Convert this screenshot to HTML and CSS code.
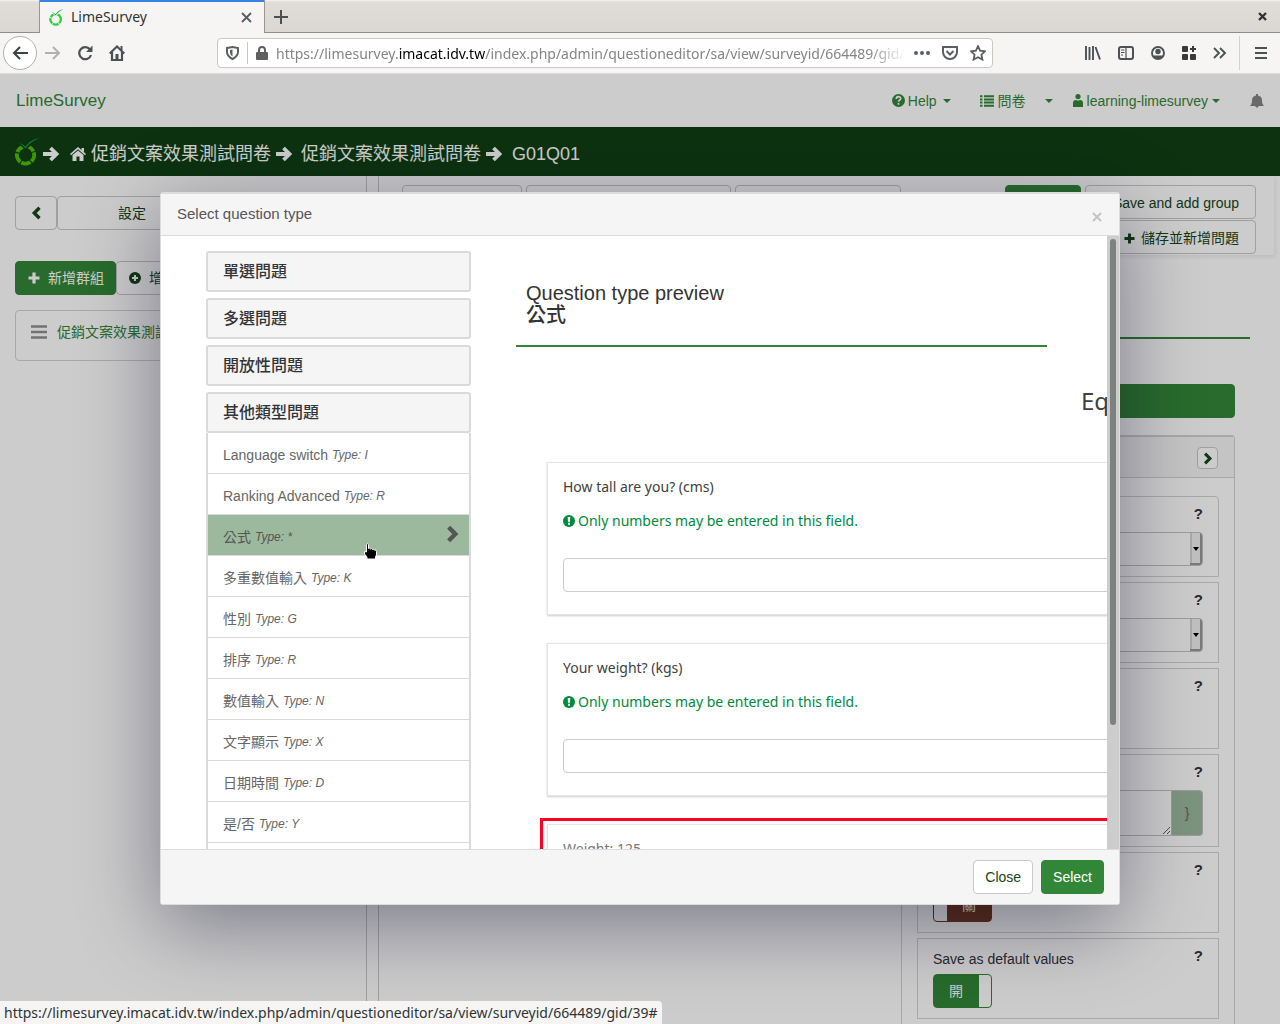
FILE: index.html
```html
<!DOCTYPE html>
<html lang="zh-Hant">
<head>
<meta charset="utf-8">
<meta name="viewport" content="width=device-width, initial-scale=1">
<title>LimeSurvey</title>
<link rel="stylesheet" href="styles.css">
</head>
<body>
<svg class="defs" aria-hidden="true">
  <symbol id="arrow" viewBox="0 0 16 16"><path d="M0 8h12M7.500 2l6 6-6 6" fill="none" stroke="currentColor" stroke-width="3.800"/></symbol>
  <symbol id="chev-r" viewBox="0 0 16 16"><path d="M5 2l6 6-6 6" fill="none" stroke="currentColor" stroke-width="3.800"/></symbol>
  <symbol id="chev-l" viewBox="0 0 16 16"><path d="M12 2L6 8l6 6" fill="none" stroke="currentColor" stroke-width="3.800"/></symbol>
  <symbol id="plus" viewBox="0 0 12 12"><path d="M6 .500v11M.500 6h11" stroke="currentColor" stroke-width="3.200" fill="none"/></symbol>
  <symbol id="logo" viewBox="0 0 24 28"><circle cx="10.500" cy="17" r="8.600" fill="none" stroke="currentColor" stroke-width="3.800" stroke-dasharray="9.650 1.150" transform="rotate(-18 10.500 17)"/><path class="gap" d="M4 6l6.500 6.500L18 5z"/><path class="leaf" d="M4 4l6.500 4.500C14 4 18 1 24 .500 18 2.500 14 6 10.500 10.500z"/></symbol>
  <symbol id="warn" viewBox="0 0 12 12"><circle cx="6" cy="6" r="6" fill="currentColor"/><path d="M4.700 2h2.600L7 6.800H5zM5 7.800h2v2H5z" fill="#fff"/></symbol>
</svg>

<div class="browser">
  <div class="tabs">
    <div class="tab">
      <svg class="logo tab-logo" width="15" height="17"><use href="#logo"/></svg>
      <span class="tab-title">LimeSurvey</span>
      <button class="chrome-btn" aria-label="Close tab"><svg width="11" height="11" viewBox="0 0 11 11"><path d="M1 1l9 9M10 1l-9 9" stroke="#555b5e" stroke-width="1.800"/></svg></button>
    </div>
    <button class="chrome-btn new-tab" aria-label="New tab"><svg width="14" height="14" viewBox="0 0 14 14"><path d="M7 0v14M0 7h14" stroke="#4b5052" stroke-width="2"/></svg></button>
    <button class="chrome-btn win-close" aria-label="Close window"><svg width="9" height="9" viewBox="0 0 9 9"><path d="M1 1l7 7M8 1L1 8" stroke="#2e3436" stroke-width="2.400"/></svg></button>
  </div>
  <div class="toolbar">
    <button class="chrome-btn back" aria-label="Back"><svg width="16" height="14" viewBox="0 0 16 14"><path d="M16 7H2M8 1L2 7l6 6" fill="none" stroke="#3c4245" stroke-width="2"/></svg></button>
    <button class="chrome-btn fwd" aria-label="Forward"><svg width="16" height="14" viewBox="0 0 16 14"><path d="M0 7h14M8 1l6 6-6 6" fill="none" stroke="#b0b1b0" stroke-width="2"/></svg></button>
    <button class="chrome-btn reload" aria-label="Reload"><svg width="16" height="16" viewBox="0 0 16 16"><path d="M13 4.500A6 6 0 1 0 14 10" fill="none" stroke="#4b5255" stroke-width="2.200"/><path d="M15.500.500v6.500H9z" fill="#4b5255"/></svg></button>
    <button class="chrome-btn home" aria-label="Home"><svg width="16" height="16" viewBox="0 0 16 16"><path d="M.700 8.500L8 1.500l7.300 7M3 7v8h10V7" fill="none" stroke="#4b5255" stroke-width="2.200"/><path d="M6.500 9h3v6h-3zM11.500 1h2v4h-2z" fill="#4b5255"/></svg></button>
    <div class="urlbar">
      <svg width="13" height="14" viewBox="0 0 13 14"><path d="M1 2l5.500-1L12 2v4c0 3.500-2.500 5.500-5.500 7C3.500 11.500 1 9.500 1 6z" fill="none" stroke="#5b5f61" stroke-width="2"/><path d="M4 4l2.500-.500v7C4.500 9 4 8 4 6z" fill="#5b5f61"/></svg>
      <span class="url-sep"></span>
      <svg width="12" height="14" viewBox="0 0 12 14"><path d="M3 7V4a3 3 0 0 1 6 0v3" fill="none" stroke="#606060" stroke-width="2"/><rect y="6" width="12" height="8" rx="1" fill="#606060"/></svg>
      <span class="url">https://limesurvey.<b>imacat.idv.tw</b>/index.php/admin/questioneditor/sa/view/surveyid/664489/gid/</span>
      <svg width="16" height="4" viewBox="0 0 16 4" fill="#5b5f61"><circle cx="2" cy="2" r="2"/><circle cx="8" cy="2" r="2"/><circle cx="14" cy="2" r="2"/></svg>
      <svg class="pocket" width="16" height="15" viewBox="0 0 16 15"><path d="M1 1h14v5a7 7 0 0 1-14 0z" fill="none" stroke="#5b5f61" stroke-width="2"/><path d="M4.500 5L8 8.500 11.500 5" fill="none" stroke="#5b5f61" stroke-width="2"/></svg>
      <svg class="star" width="16" height="16" viewBox="0 0 16 16"><path d="M8 1.200l2.100 4.500 4.900.600-3.600 3.400 1 4.900L8 12.200l-4.400 2.400 1-4.900L1 6.300l4.900-.600z" fill="none" stroke="#5b5f61" stroke-width="1.800"/></svg>
    </div>
    <div class="tools">
      <svg width="16" height="14" viewBox="0 0 16 14"><path d="M1 0v14M4.500 1v13M8 0v14M10.500 1l4.500 12.500" stroke="#4b5255" stroke-width="1.900"/></svg>
      <svg width="16" height="14" viewBox="0 0 16 14"><rect x="1" y="1" width="14" height="12" rx="2" fill="none" stroke="#4b5255" stroke-width="2"/><path d="M8 1v12M3 4h3.500M3 6.500h3.500M3 9h2" stroke="#4b5255" stroke-width="1.200"/></svg>
      <svg width="14" height="14" viewBox="0 0 14 14"><circle cx="7" cy="7" r="6" fill="none" stroke="#4b5255" stroke-width="1.900"/><circle cx="7" cy="5.500" r="2.700" fill="#4b5255"/><path d="M2.500 9.500h9C10.500 12 9 13 7 13s-3.500-1-4.500-3.500z" fill="#4b5255"/></svg>
      <svg width="14" height="14" viewBox="0 0 14 14" fill="#3a3a3a"><rect width="6" height="6" rx="1"/><rect y="8" width="6" height="6" rx="1"/><rect x="8" y="8" width="6" height="6" rx="1"/><path d="M10 0h2v2h2v2h-2v2h-2V4H8V2h2z"/></svg>
      <svg width="14" height="12" viewBox="0 0 14 12"><path d="M1 1l5 5-5 5M7 1l5 5-5 5" fill="none" stroke="#4b5255" stroke-width="1.900"/></svg>
    </div>
    <button class="chrome-btn burger" aria-label="Menu"><svg width="12" height="12" viewBox="0 0 12 12"><path d="M0 1h12M0 6h12M0 11h12" stroke="#4b5255" stroke-width="2"/></svg></button>
  </div>

  <div class="viewport">
    <div class="app">
      <nav class="topnav">
        <a class="brand" href="#">LimeSurvey</a>
        <a class="nav-help" href="#"><svg width="13" height="13" viewBox="0 0 13 13"><circle cx="6.500" cy="6.500" r="6.500" fill="currentColor"/><path d="M4.300 5c0-3 4.400-3 4.400-.400 0 1.600-2.200 1.500-2.200 3.200M6.500 9v1.800" stroke="#fff" stroke-width="1.700" fill="none"/></svg>Help<i class="caret"></i></a>
        <a class="nav-surveys" href="#"><svg width="14" height="12" viewBox="0 0 14 12"><path d="M0 1.200h2.500M4 1.200h10M0 4.400h2.500M4 4.400h10M0 7.600h2.500M4 7.600h10M0 10.800h2.500M4 10.800h10" stroke="currentColor" stroke-width="2"/></svg>問卷</a>
        <a class="nav-more" href="#" aria-label="More"><i class="caret"></i></a>
        <a class="nav-user" href="#"><svg width="10" height="13" viewBox="0 0 10 13" fill="currentColor"><circle cx="5" cy="2.600" r="2.600"/><path d="M0 13V9q0-3 3-3 2 1 4 0 3 0 3 3v4z"/></svg>learning-limesurvey<i class="caret"></i></a>
        <a class="nav-bell" href="#" aria-label="Notifications"><svg width="14" height="14" viewBox="0 0 14 14" fill="#858585"><path d="M6 0h2v1.500c3 .500 4 2.500 4 5 0 2.500.500 3.500 2 5.500H0c1.500-2 2-3 2-5.500 0-2.500 1-4.500 4-5zM5 12h4L7 14z"/></svg></a>
      </nav>
      <div class="crumbs">
        <svg class="logo crumb-logo" width="24" height="28"><use href="#logo"/></svg>
        <svg width="16" height="16"><use href="#arrow"/></svg>
        <a class="crumb-home" href="#"><svg width="16" height="14" viewBox="0 0 16 14" fill="currentColor"><path d="M8 0l8 7-1 1.300L8 2.300l-7 6L0 7zM11.500 1H14v4l-2.500-2zM8 3.500L13.500 8v6H9.500V9.500h-3V14h-4V8z"/></svg>促銷文案效果測試問卷</a>
        <svg width="16" height="16"><use href="#arrow"/></svg>
        <a class="crumb-group" href="#">促銷文案效果測試問卷</a>
        <svg width="16" height="16"><use href="#arrow"/></svg>
        <span class="crumb-question">G01Q01</span>
      </div>
      <div class="columns">
        <aside class="sidebar">
          <div class="btn-row">
            <button class="btn collapse" aria-label="Collapse"><svg width="14" height="14"><use href="#chev-l"/></svg></button>
            <button class="btn settings">設定</button>
          </div>
          <div class="btn-row add-row">
            <button class="btn primary"><svg width="12" height="12"><use href="#plus"/></svg>新增群組</button>
            <button class="btn add-question"><svg width="12" height="12" viewBox="0 0 12 12"><circle cx="6" cy="6" r="6" fill="currentColor"/><path d="M6 3v6M3 6h6" stroke="#fff" stroke-width="2"/></svg>增</button>
          </div>
          <div class="group-item">
            <svg width="16" height="14" viewBox="0 0 16 14"><path d="M0 1.500h16M0 7h16M0 12.500h16" stroke="#8f8f8f" stroke-width="2.600"/></svg>
            <a href="#">促銷文案效果測試問卷</a>
          </div>
        </aside>
        <div class="splitter"></div>
        <main class="editor">
          <div class="actions">
            <button class="btn b1" aria-label="Preview survey"></button>
            <button class="btn b2" aria-label="Preview group"></button>
            <button class="btn b3" aria-label="Preview question"></button>
            <div class="saves">
              <button class="btn primary b4" aria-label="Save"></button>
              <button class="btn save-group">Save and add group</button>
              <button class="btn save-question"><svg width="11" height="11"><use href="#plus"/></svg>儲存並新增問題</button>
            </div>
          </div>
          <div class="title-rule"></div>
          <div class="editor-body">
            <button class="btn primary type-btn" aria-label="Question type"></button>
            <section class="options">
              <div class="options-head"><button class="btn next" aria-label="Next"><svg width="13" height="13"><use href="#chev-r"/></svg></button></div>
              <div class="options-body">
                <div class="option"><div class="option-head"><button class="q" aria-label="Help">?</button></div><div class="select-wrap"><select class="dropdown" aria-label="Option"></select></div></div>
                <div class="option"><div class="option-head"><button class="q" aria-label="Help">?</button></div><div class="select-wrap"><select class="dropdown" aria-label="Option"></select></div></div>
                <div class="option"><div class="option-head"><button class="q" aria-label="Help">?</button></div></div>
                <div class="option"><div class="option-head"><button class="q" aria-label="Help">?</button></div><div class="expression"><textarea aria-label="Expression"></textarea><span>}</span></div></div>
                <div class="option"><div class="option-head"><button class="q" aria-label="Help">?</button></div><label class="switch off"><input type="checkbox"><span>關</span></label></div>
                <div class="option"><div class="option-head"><label for="defaults">Save as default values</label><button class="q" aria-label="Help">?</button></div><label class="switch"><input type="checkbox" id="defaults" checked><span>開</span></label></div>
              </div>
            </section>
          </div>
        </main>
      </div>
    </div>

    <div class="backdrop">
      <div class="modal" role="dialog" aria-labelledby="modal-title">
        <header class="modal-head"><h2 id="modal-title">Select question type</h2><button class="modal-x" aria-label="Close"><svg width="10" height="10" viewBox="0 0 10 10"><path d="M1 1l8 8M9 1L1 9" stroke="#c4c4c4" stroke-width="2"/></svg></button></header>
        <div class="modal-body">
          <div class="scroll-area">
            <div class="types">
              <button class="category">單選問題</button>
              <button class="category">多選問題</button>
              <button class="category">開放性問題</button>
              <button class="category open">其他類型問題</button>
              <div class="type-list">
                <a href="#">Language switch <em>Type: I</em></a>
                <a href="#">Ranking Advanced <em>Type: R</em></a>
                <a href="#" class="selected">公式 <em>Type: *</em><svg width="18" height="18"><use href="#chev-r"/></svg></a>
                <a href="#">多重數值輸入 <em>Type: K</em></a>
                <a href="#">性別 <em>Type: G</em></a>
                <a href="#">排序 <em>Type: R</em></a>
                <a href="#">數值輸入 <em>Type: N</em></a>
                <a href="#">文字顯示 <em>Type: X</em></a>
                <a href="#">日期時間 <em>Type: D</em></a>
                <a href="#">是/否 <em>Type: Y</em></a>
                <a href="#" aria-label="Next type"></a>
              </div>
            </div>
            <div class="preview">
              <h3>Question type preview<br><strong>公式</strong></h3>
              <div class="sample">
                <h4>Eq</h4>
                <div class="question"><label for="tall">How tall are you? (cms)</label><p class="hint"><svg width="12" height="12"><use href="#warn"/></svg>Only numbers may be entered in this field.</p><input id="tall" type="text"></div>
                <div class="question"><label for="weight">Your weight? (kgs)</label><p class="hint"><svg width="12" height="12"><use href="#warn"/></svg>Only numbers may be entered in this field.</p><input id="weight" type="text"></div>
                <div class="highlight"><div class="question result">Weight: 125</div></div>
              </div>
            </div>
          </div>
          <div class="scrollbar"><div class="thumb"></div></div>
        </div>
        <footer class="modal-foot"><button class="btn">Close</button><button class="btn primary">Select</button></footer>
      </div>
    </div>
    <div class="status">https://limesurvey.imacat.idv.tw/index.php/admin/questioneditor/sa/view/surveyid/664489/gid/39#</div>
    <svg class="cursor" width="16" height="17" viewBox="0 0 16 17"><path d="M3.500 1.500Q4.500 0 5.500 1.500v4q1-1 2 .500 1-1 2 .500 1-.500 2 .500 2-.500 2 1.500v3.500l-1 2v2H4v-2L1.500 11V8.500l2 .500z" fill="#000" stroke="#fff" stroke-width="1"/></svg>
  </div>
</div>
</body>
</html>
```
FILE: styles.css
```css
* { box-sizing: border-box; }
body {
  margin: 0;
  font: 14px/20px "Liberation Sans", "Noto Sans CJK TC", sans-serif;
  color: #343438;
}
a { color: #328637; text-decoration: none; }
button, input, select, textarea { font: inherit; }
svg { flex: none; display: block; }
h2, h3, h4, p { margin: 0; font-weight: 400; }
.defs { position: absolute; width: 0; height: 0; }

.browser { display: flex; flex-direction: column; height: 100vh; overflow: hidden; }

/* browser frame */
.tabs, .toolbar, .status { font-family: "Noto Sans", "Noto Sans CJK TC", sans-serif; }
.chrome-btn { display: flex; align-items: center; justify-content: center; padding: 0; border: 0; background: none; }
.tabs {
  display: flex;
  align-items: center;
  height: 33px;
  padding-left: 39px;
  background: linear-gradient(#f6f5f4, #e0dcd9 2px, #dbd7d2);
  box-shadow: inset 0 -1px #8f8c89;
}
.tab {
  display: flex;
  align-items: center;
  width: 226px;
  height: 33px;
  padding: 1px 12px 0 9px;
  border: solid #99958f;
  border-width: 0 1px;
  background: #f6f5f4;
  box-shadow: inset 0 2px #3584e4;
}
.tab-title { flex: 1; padding-left: 7px; font-size: 14px; color: #2e3436; }
.logo { --gap: #f6f5f4; color: #2bd23b; }
.leaf { fill: #169548; }
.gap { fill: var(--gap); }
.new-tab { margin-left: 9px; }
.win-close { margin: 0 13px 0 auto; }
.toolbar {
  display: flex;
  align-items: center;
  height: 41px;
  padding-right: 13px;
  background: #f6f5f4;
  border-bottom: 1px solid #dcdad8;
}
.back { width: 34px; height: 34px; margin-left: 3px; border: 1px solid #b5b2ae; border-radius: 50%; background: #fff; }
.fwd { margin-left: 8px; }
.reload { margin-left: 16px; }
.home { margin-left: 16px; }
.urlbar {
  display: flex;
  flex: 1;
  align-items: center;
  gap: 8px;
  min-width: 0;
  height: 30px;
  margin-left: 92px;
  padding: 0 6px 0 8px;
  border: 1px solid #cdc7c2;
  border-radius: 4px;
  background: #fff;
}
.url-sep { width: 1px; height: 22px; background: #cdc7c2; }
.url {
  flex: 1;
  overflow: hidden;
  padding-top: 1px;
  white-space: nowrap;
  font-size: 14px;
  color: #858585;
  -webkit-mask-image: linear-gradient(90deg, #000 94%, transparent);
  mask-image: linear-gradient(90deg, #000 94%, transparent);
}
.url b { font-weight: 400; color: #000; }
.pocket, .star { margin-left: 4px; }
.tools { display: flex; align-items: center; gap: 17px; margin-left: 92px; }
.burger { height: 34px; margin-left: 12px; padding-left: 15px; border-left: 1px solid #d5d1cd; }

.viewport { position: relative; flex: 1; min-height: 0; overflow: hidden; }
.status {
  position: absolute;
  left: 0;
  bottom: 0;
  height: 23px;
  padding: 0 4px;
  border-radius: 0 4px 0 0;
  background: #f6f5f4;
  font-size: 14px;
  line-height: 23px;
  color: #2e3436;
}
.cursor { position: absolute; left: 363px; top: 469px; }

/* application */
.app { display: flex; flex-direction: column; height: 100%; }
.topnav { display: flex; flex: none; align-items: center; height: 53px; padding: 0 16px; }
.topnav a { display: flex; align-items: center; }
.brand { margin-right: auto; font-size: 17px; }
.caret { border: solid transparent; border-width: 4px 4px 0; border-top-color: currentColor; margin-left: 7px; }
.nav-help { gap: 3px; }
.nav-help .caret { margin-left: 3px; }
.nav-surveys { gap: 4px; margin-left: 29px; }
.nav-more { margin-left: 12px; }
.nav-user { gap: 4px; margin-left: 20px; }
.nav-user .caret { margin-left: 0; }
.nav-bell { margin-left: 30px; }
.crumbs {
  display: flex;
  flex: none;
  align-items: center;
  height: 49px;
  padding: 4px 15px 0;
  background: #103f13;
  color: #fff;
  font-size: 18px;
}
.crumbs a { color: #fff; }
.crumb-logo { --gap: #103f13; color: #4dbd08; margin: 0 4px 4px 0; }
.crumb-home { display: flex; align-items: center; gap: 5px; margin: 0 5px 0 11px; }
.crumb-group { margin: 0 5px 0 9px; }
.crumb-question { margin-left: 10px; }
.columns { display: flex; flex: 1; min-height: 0; }

.btn {
  display: flex;
  align-items: center;
  justify-content: center;
  height: 34px;
  padding: 0 12px;
  border: 1px solid #c9c9c9;
  border-radius: 4px;
  background: #fff;
  color: #164519;
}
.primary { border-color: #328637; background: #328637; color: #fff; }
.sidebar { width: 367px; flex: none; padding: 20px 15px; border-right: 1px solid #c9c9c9; overflow: hidden; }
.btn-row { display: flex; }
.collapse { width: 42px; }
.settings { width: 150px; }
.add-row { margin-top: 31px; }
.add-row .btn { gap: 8px; padding: 0 11px 0 12px; }
.group-item {
  display: flex;
  gap: 10px;
  height: 51px;
  margin-top: 15px;
  padding: 11px 15px;
  border: 1px solid #d3d3d3;
  border-radius: 4px;
  white-space: nowrap;
}
.group-item svg { margin-top: 3px; }
.splitter { width: 12px; flex: none; border-right: 1px solid #c9c9c9; }
.editor { flex: 1; min-width: 0; overflow: hidden; }
.actions {
  display: flex;
  gap: 4px;
  height: 79px;
  margin-right: 6px;
  padding: 9px 18px 0 23px;
  box-shadow: 1px 2px 4px #ececec;
}
.b1 { width: 120px; }
.b2 { width: 205px; }
.b3 { width: 166px; }
.b4 { width: 76px; }
.saves { display: flex; flex-wrap: wrap; align-content: flex-start; justify-content: flex-end; width: 252px; gap: 1px 4px; margin-left: auto; }
.save-group { width: 171px; padding: 2px 16px 0; justify-content: flex-end; white-space: nowrap; }
.save-question { width: 171px; padding: 2px 16px 0; justify-content: flex-end; gap: 6px; }
.title-rule { height: 2px; margin: 82px 30px 0 23px; background: #328637; }
.editor-body { display: flex; flex-direction: column; align-items: flex-end; padding: 45px 45px 0 23px; }
.type-btn { width: 334px; }
.options { width: 334px; margin-top: 17px; border: 1px solid #d3d3d3; border-top-width: 2px; border-radius: 4px; }
.options-head { display: flex; justify-content: flex-end; height: 41px; padding: 10px 16px 0; border-bottom: 1px solid #d3d3d3; background: #f5f5f5; }
.next { width: 21px; height: 22px; padding: 0; }
.options-body { display: flex; flex-direction: column; gap: 5px; padding: 18px 15px 40px; }
.option { min-height: 81px; padding: 0 15px 10px; border: 1px solid #d3d3d3; }
.option:first-child { border-radius: 4px 4px 0 0; }
.option-head { display: flex; justify-content: space-between; height: 35px; padding-top: 10px; }
.q { height: 16px; margin: -1px 0 0 auto; padding: 0; border: 0; background: none; color: #343438; font-weight: 700; font-size: 15px; line-height: 16px; }
.select-wrap { position: relative; }
.select-wrap::after {
  content: "";
  position: absolute;
  right: 4px;
  top: 15px;
  border: solid transparent;
  border-width: 4px 3px 0;
  border-top-color: #000;
}
.dropdown {
  display: block;
  width: 100%;
  height: 34px;
  appearance: none;
  border: 1px solid #c4c4c4;
  border-radius: 4px;
  background:
    linear-gradient(#999, #999) right bottom / 12px 2px no-repeat,
    linear-gradient(90deg, #d3d3d3 2px, #f0f0f0 2px 10px, #999 10px) right / 12px 100% no-repeat,
    #fff;
}
.expression { display: flex; height: 46px; }
.expression textarea { flex: 1; min-width: 0; border: 1px solid #c4c4c4; border-radius: 4px 0 0 4px; resize: both; }
.expression span { width: 31px; border: 1px solid #c4c4c4; border-left: 0; border-radius: 0 4px 4px 0; background: #9cb99d; line-height: 44px; text-align: center; color: #666; }
.switch { display: flex; width: 59px; height: 34px; border: 1px solid #328637; border-radius: 4px; background: linear-gradient(90deg, #328637 45px, #fff 45px); color: #fff; }
.switch input { position: absolute; opacity: 0; }
.switch span { width: 44px; line-height: 33px; text-align: center; }
.switch.off { justify-content: flex-end; border-color: #72391f; background: linear-gradient(90deg, #fff 13px, #72391f 13px); }

/* question type dialog */
.backdrop { position: absolute; inset: 0; display: flex; align-items: flex-start; justify-content: center; padding-top: 118px; background: rgba(0, 0, 0, .2); }
.modal { width: 75%; border: 1px solid #dcdcdc; border-radius: 3px; background: #fff; box-shadow: 0 20px 80px rgba(10, 10, 40, .42); }
.modal-head { display: flex; justify-content: space-between; height: 43px; padding: 10px 17px 0 16px; border-top: 1px solid #dcdcdc; border-bottom: 1px solid #dcdcdc; background: #f5f5f5; }
.modal-head h2 { font-size: 15px; line-height: 20px; color: #55555a; }
.modal-x { height: 10px; margin-top: 8px; padding: 0; border: 0; background: none; }
.modal-body { display: flex; height: calc(60vh - 1px); }
.scroll-area { display: flex; flex: 1; min-width: 0; overflow: hidden; padding: 15px 0 0 45px; }
.scrollbar { width: 12px; padding: 3px; background: #cdcdcd; }
.thumb { height: 80%; border-radius: 3px; background: #7d8280; }
.types { display: flex; flex-direction: column; gap: 6px; flex: none; width: 265px; }
.category {
  height: 41px;
  flex: none;
  padding: 0 15px;
  border: 2px solid #d9dada;
  border-radius: 3px;
  background: #f5f5f5;
  color: #343438;
  font-size: 16px;
  font-weight: 500;
  text-align: left;
}
.type-list { margin-top: -6px; border: solid #d9dada; border-width: 0 2px; }
.type-list a { display: flex; align-items: center; gap: 4px; height: 41px; padding: 3px 8px 0 15px; border-bottom: 1px solid #d9dada; color: #666; }
.type-list em { font-size: 12px; line-height: 20px; }
.type-list .selected { background: #9cb99e; color: #555; }
.type-list svg { margin: 0 0 6px auto; color: #555; }
.preview { flex: 1; min-width: 0; padding: 31px 0 0 45px; }
.preview h3 { width: 531px; height: 65px; padding-left: 10px; border-bottom: 2px solid #328637; font-size: 20px; line-height: 22px; color: #333; }
.preview strong { font-weight: 500; }
.sample { width: 1100px; padding-left: 31px; font-family: "Noto Sans", sans-serif; }
.sample h4 { margin: 37px 0 44px; padding-left: 534px; font-size: 24px; line-height: 34px; color: #404040; }
.question { height: 153px; margin-bottom: 28px; padding: 14px 15px; border: 1px solid #e5e5e5; box-shadow: 0 1px 2px #ccc; }
.question label { display: block; color: #404040; }
.hint { display: flex; align-items: center; gap: 3px; margin: 14px 0 27px; color: #008a3c; }
.question input { display: block; width: 100%; height: 34px; border: 1px solid #ccc; border-radius: 4px; }
.highlight { margin: -6px 0 0 -7px; padding: 3px 4px; border: 3px solid #ff0022; }
.result { color: #777; }
.modal-foot { display: flex; justify-content: flex-end; gap: 8px; height: 55px; padding: 10px 15px; border-top: 1px solid #dcdcdc; background: #f5f5f5; }
.modal-foot .btn { padding: 0 11px; }
```
